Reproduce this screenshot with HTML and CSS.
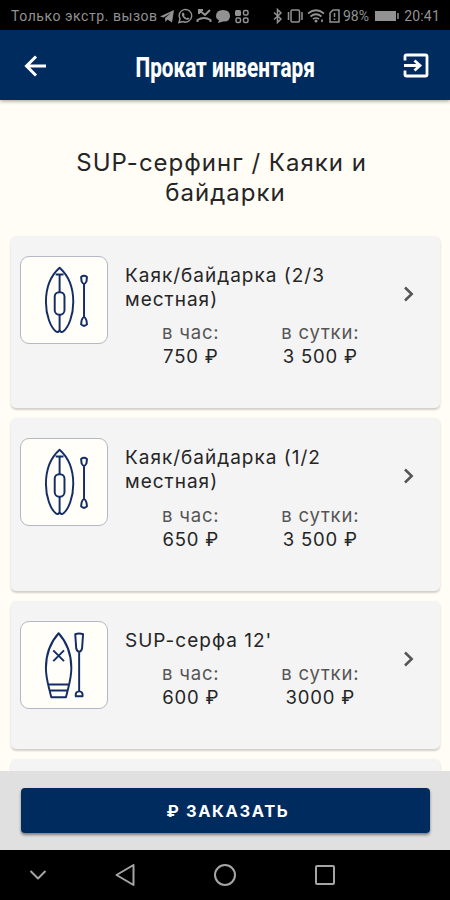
FILE: index.html
```html
<!DOCTYPE html>
<html lang="ru">
<head>
<meta charset="utf-8">
<title>Прокат инвентаря</title>
<link rel="stylesheet" href="styles.css">
</head>
<body>
<svg class="defs" width="0" height="0">
  <symbol id="kayak" viewBox="0 0 88 88">
    <path d="M39.500 11C30.500 19 25.500 31 25.500 46C25.500 60 30.500 72 35.500 76Q38 78 39.500 75Q41 78 43.500 76C48.500 72 53.500 60 53.500 46C53.500 31 48.500 19 39.500 11ZM35.500 18H43.500M39.500 18V36M39.500 59V75"/>
    <rect x="34.500" y="36" width="10" height="23" rx="4.500"/>
    <path d="M64.500 28V62M61.500 20.500Q64.500 18 67.500 20.500L67 25Q64.500 30 62 25ZM62 65Q64.500 58 67 65L67.500 69Q64.500 72 61.500 69Z"/>
  </symbol>
  <symbol id="sup" viewBox="0 0 88 88">
    <path d="M38.500 11.500C30 21 25.500 34 25.500 47C25.500 55 27 61 28.500 67L31 77H46L48.500 67C50 61 51.500 55 51.500 47C51.500 34 47 21 38.500 11.500ZM27.500 64H49.500M28.500 70H48.500M33 29L44 40M44 29L33 40"/>
    <path d="M59.500 31V71M55.500 12.500Q59.500 11 63.500 12.500L62.500 27Q61.500 30.500 59.500 30.500Q57.500 30.500 56.500 27ZM56 76Q55.500 71 59.500 71Q63.500 71 63 76Z"/>
  </symbol>
  <symbol id="next" viewBox="0 0 24 24"><path d="M9 5.500L15.700 12L9 18.500"/></symbol>
</svg>
<div class="phone">
  <div class="status">
    <span class="carrier">Только экстр. вызов</span>
    <svg class="notif" viewBox="0 0 92 16">
      <path class="fill" d="M0 8.500L14 2L12 14.500L7.500 11.500L5.500 14L5 10L11 5L3.500 9.500Z"/>
      <path d="M19 14.500L20 11A6.300 6.300 0 1 1 23 13.600Z"/>
      <path class="fill" d="M22.500 4.500L24 5L24.500 7L24 8L26.500 10.200L28 9.500L29.500 10.500Q28.500 12.500 26 11.500Q22.500 10 21.800 6.500Z"/>
      <path d="M39 2L45 7L50 2M39 6V2H43M37.500 14V12Q44 8 50.500 12V14" stroke-width="2"/>
      <path class="fill" d="M56 8Q56 2 63 2T70 8T63 13.500L58 15L59 12Q56 11 56 8Z"/>
      <rect class="fill" x="75" y="2" width="6" height="6" rx="1.500"/>
      <rect x="83.500" y="2.500" width="4.500" height="4.500" rx="1.500"/><rect x="76" y="10" width="4.500" height="4.500" rx="1.500"/><rect x="83.500" y="10" width="4.500" height="4.500" rx="1.500"/>
    </svg>
    <svg class="system" viewBox="0 0 70 16">
      <path d="M2 4.500L9 11L5.500 14.500V1.500L9 5L2 11.500"/>
      <rect x="19" y="2" width="8.500" height="12" rx="1.500"/><path d="M16.500 4V12M30 4V12"/>
      <path d="M36 5.500Q44 -1 52 5.500M38.500 8.500Q44 4 49.500 8.500M41 11Q44 9 47 11M50 11.500V14" stroke-width="1.700"/><circle class="fill" cx="44" cy="13" r="1.500"/>
      <path d="M58 5L61 2H67V14H58ZM62.500 5V9M62.500 10.500V12"/>
    </svg>
    <span class="percent">98%</span>
    <svg class="battery" viewBox="0 0 26 12"><path class="fill" d="M1 1H22V11H1Z"/><path d="M24 3V9"/></svg>
    <span class="clock">20:41</span>
  </div>
  <header class="bar">
    <svg class="back" viewBox="0 0 24 24"><path d="M22 12H3.500M12 2.500L2.500 12L12 21.500"/></svg>
    <h1><span>Прокат инвентаря</span></h1>
    <svg class="exit" viewBox="0 0 28 28"><path d="M3 8.500V4.500Q3 3 4.500 3H23.500Q25 3 25 4.500V22.500Q25 24 23.500 24H4.500Q3 24 3 22.500V18.500M2 13.500H17M12.500 8.500L18 13.500L12.500 18.500"/></svg>
  </header>
  <main class="content">
    <h2>SUP-серфинг / Каяки и&nbsp;<br>байдарки</h2>
    <section class="list">
      <article class="card">
        <div class="thumb"><svg><use href="#kayak"/></svg></div>
        <div class="info">
          <h3>Каяк/байдарка (2/3<br>местная)</h3>
          <div class="prices"><p>в час:<b>750 ₽</b></p><p>в сутки:<b>3 500 ₽</b></p></div>
        </div>
        <svg class="next"><use href="#next"/></svg>
      </article>
      <article class="card">
        <div class="thumb"><svg><use href="#kayak"/></svg></div>
        <div class="info">
          <h3>Каяк/байдарка (1/2<br>местная)</h3>
          <div class="prices"><p>в час:<b>650 ₽</b></p><p>в сутки:<b>3 500 ₽</b></p></div>
        </div>
        <svg class="next"><use href="#next"/></svg>
      </article>
      <article class="card short">
        <div class="thumb"><svg><use href="#sup"/></svg></div>
        <div class="info">
          <h3>SUP-серфа 12'</h3>
          <div class="prices"><p>в час:<b>600 ₽</b></p><p>в сутки:<b>3000 ₽</b></p></div>
        </div>
        <svg class="next"><use href="#next"/></svg>
      </article>
      <article class="card"></article>
    </section>
  </main>
  <footer class="order"><button>₽ ЗАКАЗАТЬ</button></footer>
  <nav class="nav">
    <svg viewBox="0 0 24 24"><path d="M4.500 8L12 15.500L19.500 8"/></svg>
    <svg viewBox="0 0 24 24"><path d="M20.500 2V22L3.500 12Z"/></svg>
    <svg viewBox="0 0 24 24"><circle cx="12" cy="12" r="10"/></svg>
    <svg viewBox="0 0 24 24"><rect x="3" y="3" width="18" height="18" rx="1"/></svg>
  </nav>
</div>
</body>
</html>
```
FILE: styles.css
```css
* { box-sizing: border-box; margin: 0; padding: 0; }
body { font-family: Inter, "Liberation Sans", sans-serif; background: #fffdf5; }
svg { display: block; fill: none; stroke: currentColor; stroke-width: 1.5; flex: none; }
.defs { position: absolute; }
.fill { fill: currentColor; stroke: none; }
.phone { width: 450px; height: 900px; display: flex; flex-direction: column; overflow: hidden; }

.status { height: 30px; flex: none; display: flex; align-items: center; padding: 2px 10px 0 11px; background: #000; color: #929292; font: 14px Roboto, sans-serif; white-space: nowrap; }
.carrier { width: 149px; letter-spacing: 0.55px; }
.notif { width: 92px; height: 16px; }
.system { width: 70px; height: 16px; margin-left: 20px; }
.percent { width: 28px; margin-left: 1px; }
.battery { width: 26px; height: 12px; margin-left: 3px; }
.clock { margin-left: auto; letter-spacing: 0.2px; }

.bar { height: 70px; flex: none; display: flex; align-items: center; justify-content: space-between; padding: 0 20px 0 24px; background: #002b5f; color: #fff; box-shadow: 0 1px 4px rgba(0, 0, 0, .4); z-index: 1; }
.back { width: 24px; height: 24px; margin-top: 1px; stroke-width: 3; }
.exit { width: 28px; height: 28px; margin-top: 1px; stroke-width: 2.800; }
.bar h1 { width: 180px; display: flex; justify-content: center; font: 800 28px/40px Roboto, sans-serif; white-space: nowrap; padding: 5px 0 0 1px; }
.bar h1 span { transform: scaleX(.74); }

.content { flex: 1; min-height: 0; overflow: hidden; padding: 48px 10px 0 11px; background: #fffdf5; color: #252525; }
h2 { font-weight: 400; font-size: 24px; line-height: 30px; letter-spacing: 1px; text-align: center; }
.list { display: flex; flex-direction: column; gap: 10px; margin-top: 27.500px; }
.card { height: 172.500px; flex: none; display: flex; padding: 20px 20px 0 9px; background: #f4f4f4; border-radius: 5px; box-shadow: 0 2px 2px rgba(0, 0, 0, .15), 0 1px 3px rgba(0, 0, 0, .06); }
.short { height: 148px; }
.thumb { width: 88px; height: 88px; flex: none; border: 1px solid #b3b9c4; border-radius: 9px; background: #fffef8; color: #142d64; }
.thumb svg { width: 86px; height: 86px; stroke-width: 2; stroke-linejoin: round; }
.info { flex: 1; padding: 8px 0 0 17px; }
h3 { font-weight: 400; font-size: 19px; line-height: 24px; letter-spacing: 1px; white-space: nowrap; }
.prices { display: flex; margin-top: 8.500px; padding-left: 1px; }
.prices p { width: 129.500px; flex: none; text-align: center; color: #555; font-size: 18.500px; line-height: 24px; letter-spacing: .8px; }
.prices b { display: block; font-weight: 400; color: #252525; }
.next { width: 24px; height: 24px; margin-top: 26px; color: #555; stroke-width: 2.500; }

.order { height: 79px; flex: none; padding: 17px 20px 17px 21px; background: #e0e0e0; }
.order button { display: block; width: 100%; height: 45px; border: 0; border-radius: 4px; background: #002b5f; color: #fff; font: 700 16.500px Inter, sans-serif; letter-spacing: 1.600px; padding: 1px 0 0 5px; box-shadow: 0 2px 3px rgba(0, 0, 0, .45); }
.nav { height: 50px; flex: none; display: flex; align-items: center; gap: 76px; padding: 0 0 0 26px; background: #000; color: #a5a5a5; }
.nav svg { width: 24px; height: 24px; stroke-width: 2; stroke-linejoin: round; }
.nav svg:first-child { margin-right: -13px; }
```
